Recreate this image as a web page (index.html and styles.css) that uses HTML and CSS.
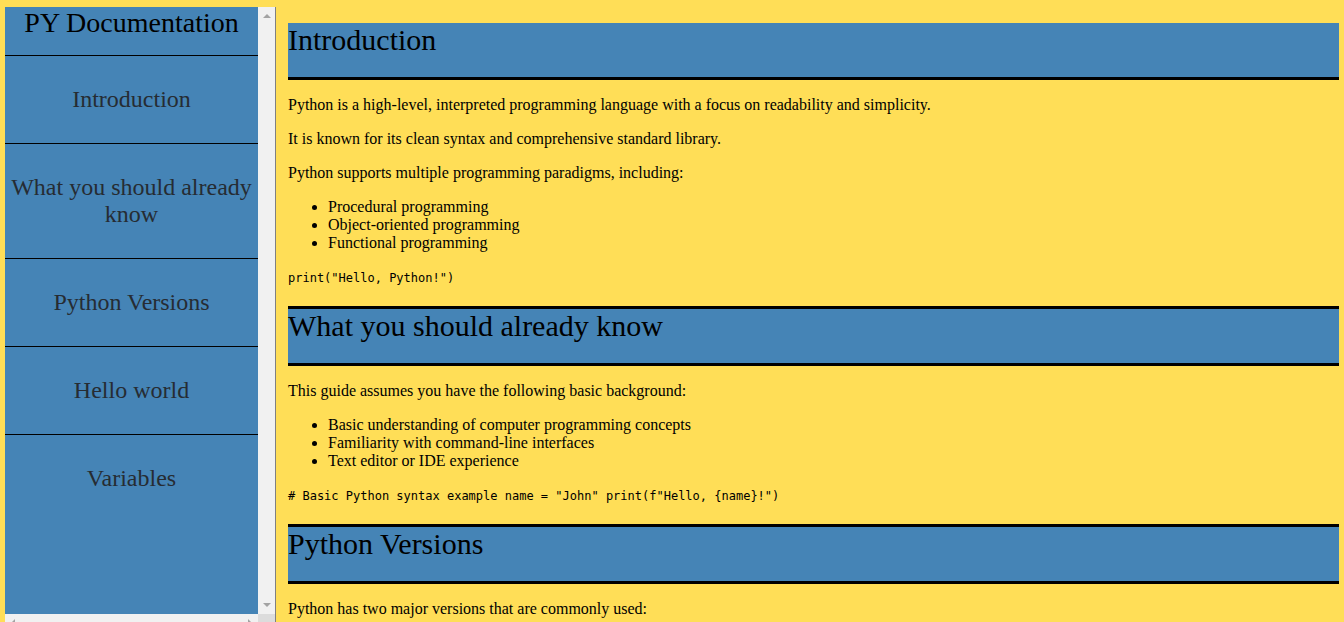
FILE: index.html
```html
<!DOCTYPE html>
<html lang="en">
<head>
<meta charset="utf-8">
<title>PY Documentation</title>
<link rel="stylesheet" href="styles.css">
</head>
<body>
<div class="page">
  <nav class="sidebar" aria-label="Sections">
    <div class="nav-content">
      <header class="nav-title">PY Documentation</header>
      <a class="nav-link" href="#introduction">Introduction</a>
      <a class="nav-link" href="#background">What you should already know</a>
      <a class="nav-link" href="#versions">Python Versions</a>
      <a class="nav-link" href="#hello">Hello world</a>
      <a class="nav-link" href="#variables">Variables</a>
    </div>
    <div class="scroll-y" aria-hidden="true">
      <svg width="8" height="4" viewBox="0 0 8 4"><path d="M0 4L4 0L8 4Z"/></svg>
      <svg width="8" height="4" viewBox="0 0 8 4"><path d="M0 0H8L4 4Z"/></svg>
    </div>
    <div class="scroll-x" aria-hidden="true">
      <svg width="4" height="8" viewBox="0 0 4 8"><path d="M4 0V8L0 4Z"/></svg>
      <svg width="4" height="8" viewBox="0 0 4 8"><path d="M0 0L4 4L0 8Z"/></svg>
    </div>
    <div class="scroll-corner"></div>
  </nav>
  <main class="docs">
    <section id="introduction">
      <header class="section-title">Introduction</header>
      <p>Python is a high-level, interpreted programming language with a focus on readability and simplicity.</p>
      <p>It is known for its clean syntax and comprehensive standard library.</p>
      <p>Python supports multiple programming paradigms, including:</p>
      <ul>
        <li>Procedural programming</li>
        <li>Object-oriented programming</li>
        <li>Functional programming</li>
      </ul>
      <code>print("Hello, Python!")</code>
    </section>
    <section id="background">
      <header class="section-title">What you should already know</header>
      <p>This guide assumes you have the following basic background:</p>
      <ul>
        <li>Basic understanding of computer programming concepts</li>
        <li>Familiarity with command-line interfaces</li>
        <li>Text editor or IDE experience</li>
      </ul>
      <code># Basic Python syntax example name = "John" print(f"Hello, {name}!")</code>
    </section>
    <section id="versions">
      <header class="section-title">Python Versions</header>
      <p>Python has two major versions that are commonly used:</p>
    </section>
  </main>
</div>
</body>
</html>
```
FILE: styles.css
```css
* {
  box-sizing: border-box;
}

body {
  margin: 0;
  overflow: hidden;
  background: #ffde57;
  color: #000;
  font: 16px/18px "Liberation Serif", "Times New Roman", serif;
}

.page {
  display: grid;
  grid-template-columns: 271px 1fr;
  gap: 12px;
  padding: 7px 5px 0;
  height: 100vh;
}

.sidebar {
  display: grid;
  grid-template-columns: 1fr 17px;
  grid-template-rows: 1fr 17px;
  height: calc(100vh + 2px);
  border-right: 1px solid #808080;
}

.nav-content {
  overflow: hidden;
  background: #4584b6;
  text-align: center;
}

.nav-title {
  padding-bottom: 16px;
  font-size: 28px;
  line-height: 32px;
}

.nav-link {
  display: block;
  padding: 30px 0;
  border-top: 1px solid #000;
  color: #262c33;
  font-size: 24px;
  line-height: 27px;
  text-decoration: none;
}

.scroll-y,
.scroll-x {
  display: flex;
  align-items: center;
  justify-content: space-between;
  background: #f1f1f1;
  fill: #a3a3a3;
}

.scroll-y {
  flex-direction: column;
  padding: 7px 0;
}

.scroll-x {
  padding: 0 6px;
}

.scroll-corner {
  background: #dcdcdc;
}

.docs {
  padding-top: 16px;
}

.section-title {
  padding-bottom: 20px;
  border-top: 3px solid #000;
  border-bottom: 3px solid #000;
  background: #4584b6;
  font-size: 30px;
  line-height: 34px;
}

section:first-child .section-title {
  border-top: 0;
}

p,
ul {
  margin: 16px 0;
}

ul {
  padding-left: 40px;
}

code {
  display: block;
  margin-bottom: 18px;
  font-family: "DejaVu Sans Mono", Consolas, monospace;
  font-size: 12px;
  line-height: 20px;
}
```
